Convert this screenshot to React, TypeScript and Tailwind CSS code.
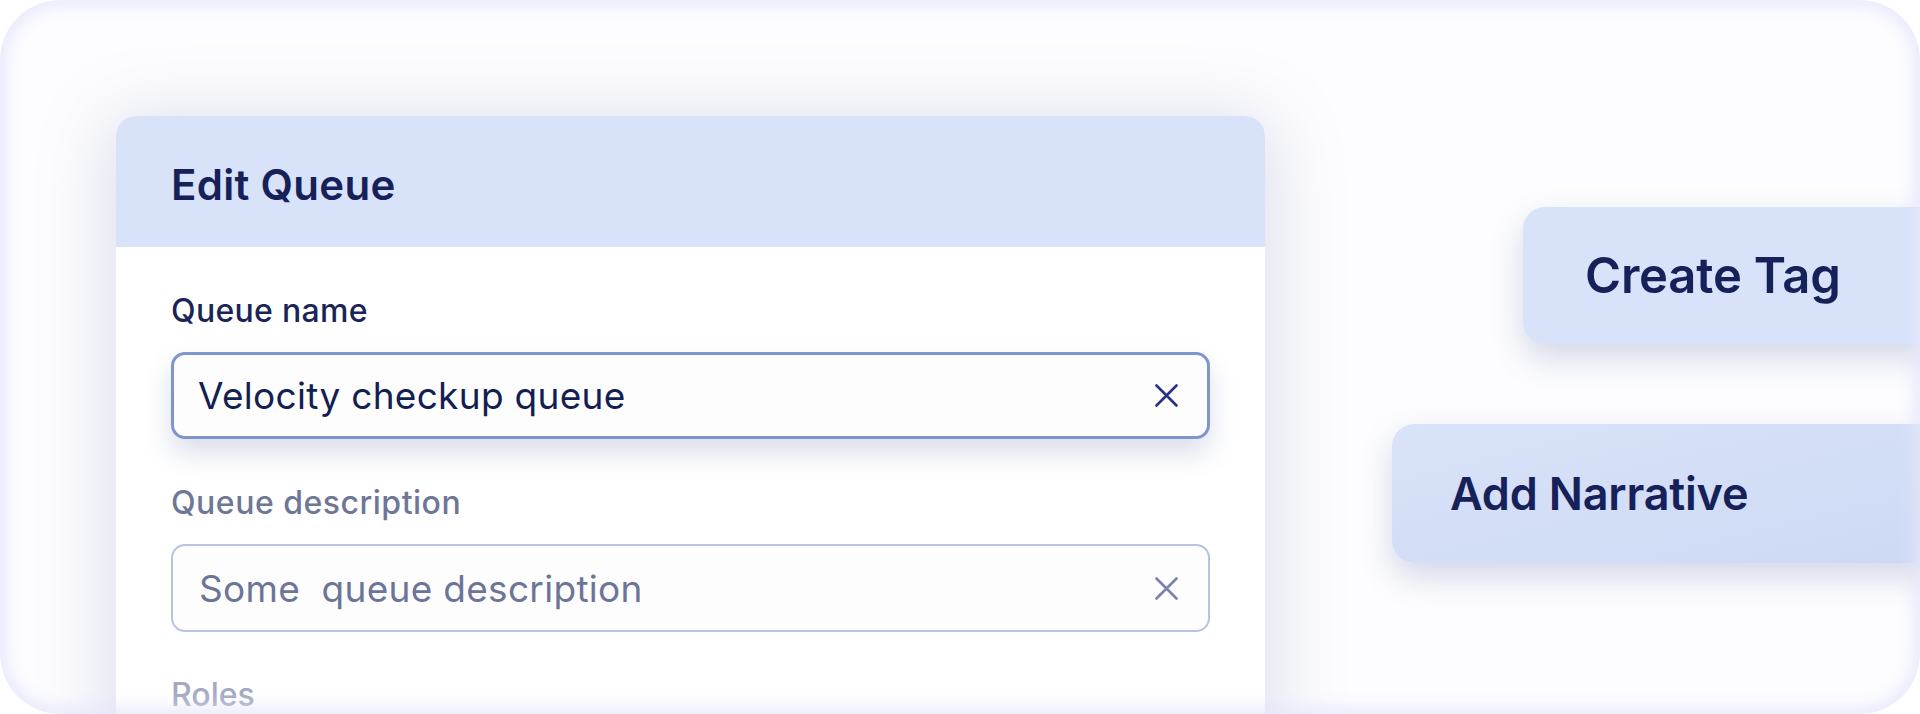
const XIcon: React.FC<{ color: string }> = ({ color }) => (
  <svg width="23" height="23" viewBox="0 0 23 23" fill="none" className="shrink-0">
    <path d="M1.5 1.5L21.5 21.5M21.5 1.5L1.5 21.5" stroke={color} strokeWidth="2.6" strokeLinecap="round" />
  </svg>
)

const App: React.FC = () => {
  return (
    <div className="relative w-[1920px] h-[714px] overflow-hidden rounded-[60px] bg-[#fdfdff] font-['Inter',sans-serif]">
      <div className="flex items-start pt-[116px] pl-[116px]">
        {/* Edit Queue card */}
        <div className="w-[1149px] h-[640px] shrink-0 rounded-t-[20px] bg-white shadow-[0_10px_70px_10px_rgba(110,120,170,0.22)]">
          <div className="h-[131px] flex items-center pl-[55px] pt-[6px] rounded-t-[20px] bg-[#d8e3fa]">
            <h1 className="text-[42px] leading-none font-semibold text-[#16215a] tracking-[0.3px]">Edit Queue</h1>
          </div>
          <div className="px-[55px]">
            <div className="mt-[48px] text-[32px] leading-none font-medium text-[#1a2557] tracking-[0.3px]">Queue name</div>
            <div className="mt-[25px] h-[87px] flex items-center justify-between pl-[24px] pr-[29px] rounded-[14px] border-[3px] border-[#7f95cd] bg-[#fdfdfe] shadow-[0_14px_26px_rgba(90,110,165,0.22)]">
              <span className="text-[37px] leading-none text-[#131e52] tracking-[0.3px]">Velocity checkup queue</span>
              <XIcon color="#27318a" />
            </div>
            <div className="mt-[48px] text-[32px] leading-none font-medium text-[#6e7796] tracking-[0.5px]">Queue description</div>
            <div className="mt-[25px] h-[88px] flex items-center justify-between pl-[26px] pr-[30px] rounded-[14px] border-2 border-[#b8c3e4] bg-[#fdfdfe]">
              <span className="text-[37px] leading-none text-[#6c7598] whitespace-pre tracking-[0.3px]">Some  queue description</span>
              <XIcon color="#7b80ae" />
            </div>
            <div className="mt-[47px] text-[32px] leading-none font-medium text-[#a3a9c1]">Roles</div>
          </div>
        </div>

        {/* Action buttons */}
        <div className="flex-1 flex flex-col pt-[91px]">
          <div className="ml-[258px] -mr-[40px] h-[137px] flex items-center pl-[62px] rounded-[22px] bg-[#d8e3fa] shadow-[0_14px_32px_rgba(80,100,155,0.24)]">
            <span className="text-[49px] leading-none font-semibold text-[#16215a] tracking-[-0.2px]">Create Tag</span>
          </div>
          <div className="mt-[80px] ml-[127px] -mr-[40px] h-[139px] flex items-center pl-[58px] rounded-[22px] bg-gradient-to-br from-[#d9e3f9] to-[#cdd9f4] shadow-[0_14px_32px_rgba(80,100,155,0.24)]">
            <span className="text-[45px] leading-none font-semibold text-[#16215a] tracking-[-0.2px]">Add Narrative</span>
          </div>
        </div>
      </div>

      {/* frame glow */}
      <div className="pointer-events-none absolute inset-0 rounded-[60px] shadow-[inset_0_0_18px_5px_rgba(230,230,252,1)]" />
    </div>
  )
}

export default App
